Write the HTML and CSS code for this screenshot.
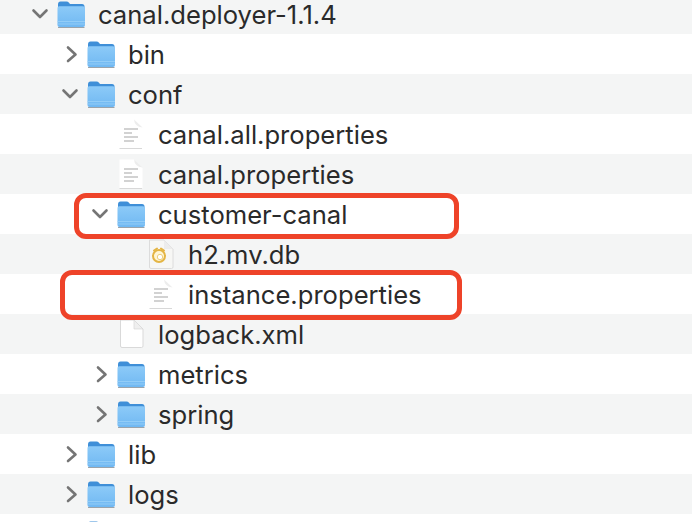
FILE: index.html
```html
<!DOCTYPE html>
<html lang="en">
<head>
<meta charset="utf-8">
<title>canal.deployer-1.1.4</title>
<link rel="stylesheet" href="styles.css">
</head>
<body>
<svg class="defs" width="0" height="0" aria-hidden="true">
  <defs>
    <linearGradient id="fb" x1="0" y1="0" x2="0" y2="1">
      <stop offset="0" stop-color="#8ccaf8"/>
      <stop offset="1" stop-color="#70b8f2"/>
    </linearGradient>
    <symbol id="folder" viewBox="0 0 28 28">
      <path d="M1 4.500Q1 1.500 3.500 1.500H9.500Q11 1.500 12 2.800L13 4H25Q27.500 4 27.500 6.500V12H1Z" fill="#3f8fd8"/>
      <path d="M0.500 8Q0.500 6.300 2.200 6.300H26Q28 6.300 28 8V25Q28 27 26 27H2.500Q0.500 27 0.500 25Z" fill="url(#fb)"/>
      <path d="M0.500 21.500H28M0.500 24H28" stroke="#9bd0f8" stroke-width="0.800" fill="none"/>
      <path d="M1 27.500H27.500" stroke="#9aa3ab" stroke-width="1" fill="none"/>
    </symbol>
    <symbol id="open" viewBox="0 0 20 20">
      <path d="M3.500 6.500L10 13L16.500 6.500" stroke="#757575" stroke-width="2.600" fill="none" stroke-linecap="round" stroke-linejoin="round"/>
    </symbol>
    <symbol id="closed" viewBox="0 0 20 20">
      <path d="M8 3.500L15.500 10.500L8 17" stroke="#757575" stroke-width="2.600" fill="none" stroke-linecap="round" stroke-linejoin="round"/>
    </symbol>
    <symbol id="doc" viewBox="0 0 28 30">
      <path d="M2.500 0.500H17L25.500 9V29H2.500Z" fill="#fff"/>
      <path d="M17 0.500Q17.500 7.500 25.500 8.500Z" fill="#ededed"/>
      <path d="M7 10H21M7 14H15M7 18H21M7 22H17" stroke="#c4c4c4" stroke-width="1.400" fill="none"/>
      <path d="M2.500 29.500H25" stroke="#d8d8d8" stroke-width="1" fill="none"/>
    </symbol>
    <symbol id="blank" viewBox="0 0 28 30">
      <path d="M3.500 1H17L26 10V27Q26 28.500 24.500 28.500H5Q3.500 28.500 3.500 27Z" fill="#fff" stroke="#d9d9d9" stroke-width="1"/>
      <path d="M17 1V10H26Z" fill="#efefef" stroke="#d9d9d9" stroke-width="0.700"/>
    </symbol>
    <symbol id="db" viewBox="0 0 28 30">
      <path d="M2.500 1H17L26 10V28Q26 29.500 24.500 29.500H4Q2.500 29.500 2.500 28Z" fill="#f7f7f5" stroke="#dcdcdc" stroke-width="1"/>
      <path d="M17 1V10H26Z" fill="#ececec"/>
      <circle cx="12" cy="17" r="6" fill="#fff6d6" stroke="#e4b544" stroke-width="2"/>
      <circle cx="13" cy="18" r="2.700" fill="#fff" stroke="#edcf7d" stroke-width="1"/>
      <path d="M7 11.500L10 9.500M14 9.500L17 11.500" stroke="#e4b544" stroke-width="2" fill="none" stroke-linecap="round"/>
    </symbol>
  </defs>
</svg>
<main class="tree">
  <div class="row gray d0"><svg class="chev"><use href="#open"/></svg><svg class="icon"><use href="#folder"/></svg><span class="name">canal.deployer-1.1.4</span></div>
  <div class="row d1"><svg class="chev"><use href="#closed"/></svg><svg class="icon"><use href="#folder"/></svg><span class="name">bin</span></div>
  <div class="row gray d1"><svg class="chev"><use href="#open"/></svg><svg class="icon"><use href="#folder"/></svg><span class="name">conf</span></div>
  <div class="row d2"><span class="chev"></span><svg class="icon file"><use href="#doc"/></svg><span class="name">canal.all.properties</span></div>
  <div class="row gray d2"><span class="chev"></span><svg class="icon file"><use href="#doc"/></svg><span class="name">canal.properties</span></div>
  <div class="row d2"><svg class="chev"><use href="#open"/></svg><svg class="icon"><use href="#folder"/></svg><span class="name">customer-canal</span></div>
  <div class="row gray d3"><span class="chev"></span><svg class="icon file"><use href="#db"/></svg><span class="name">h2.mv.db</span></div>
  <div class="row d3"><span class="chev"></span><svg class="icon file"><use href="#doc"/></svg><span class="name">instance.properties</span></div>
  <div class="row gray d2"><span class="chev"></span><svg class="icon file"><use href="#blank"/></svg><span class="name">logback.xml</span></div>
  <div class="row d2"><svg class="chev"><use href="#closed"/></svg><svg class="icon"><use href="#folder"/></svg><span class="name">metrics</span></div>
  <div class="row gray d2"><svg class="chev"><use href="#closed"/></svg><svg class="icon"><use href="#folder"/></svg><span class="name">spring</span></div>
  <div class="row d1"><svg class="chev"><use href="#closed"/></svg><svg class="icon"><use href="#folder"/></svg><span class="name">lib</span></div>
  <div class="row gray d1"><svg class="chev"><use href="#closed"/></svg><svg class="icon"><use href="#folder"/></svg><span class="name">logs</span></div>
  <div class="row d1"><span class="chev"></span><svg class="icon"><use href="#folder"/></svg></div>
</main>
<div class="mark mark-a"></div>
<div class="mark mark-b"></div>
</body>
</html>
```

FILE: styles.css
```css
html, body {
  margin: 0;
  height: 100%;
  overflow: hidden;
  background: #fff;
}

.defs {
  position: absolute;
}

.tree {
  display: flex;
  flex-direction: column;
  height: 528px;
  overflow: hidden;
  margin-top: -6px;
  font-family: Inter, "Liberation Sans", sans-serif;
  font-size: 25.6px;
  color: #2a2a2a;
}

.row {
  display: flex;
  align-items: center;
  flex: none;
  height: 40px;
  box-sizing: border-box;
}

.gray {
  background: #f4f5f5;
}

.d0 { padding-left: 30px; }
.d1 { padding-left: 60px; }
.d2 { padding-left: 90px; }
.d3 { padding-left: 120px; }

.chev {
  flex: none;
  width: 20px;
  height: 20px;
  margin-right: 7px;
}

.icon {
  flex: none;
  width: 28px;
  height: 28px;
  margin-right: 13px;
}

.file {
  height: 30px;
}

.name {
  white-space: nowrap;
}

.mark {
  position: absolute;
  box-sizing: border-box;
  border: 5px solid #ee4329;
  border-radius: 12px;
}

.mark-a {
  left: 74px;
  top: 193px;
  width: 385px;
  height: 46px;
}

.mark-b {
  left: 60px;
  top: 270px;
  width: 402px;
  height: 50px;
}
```
